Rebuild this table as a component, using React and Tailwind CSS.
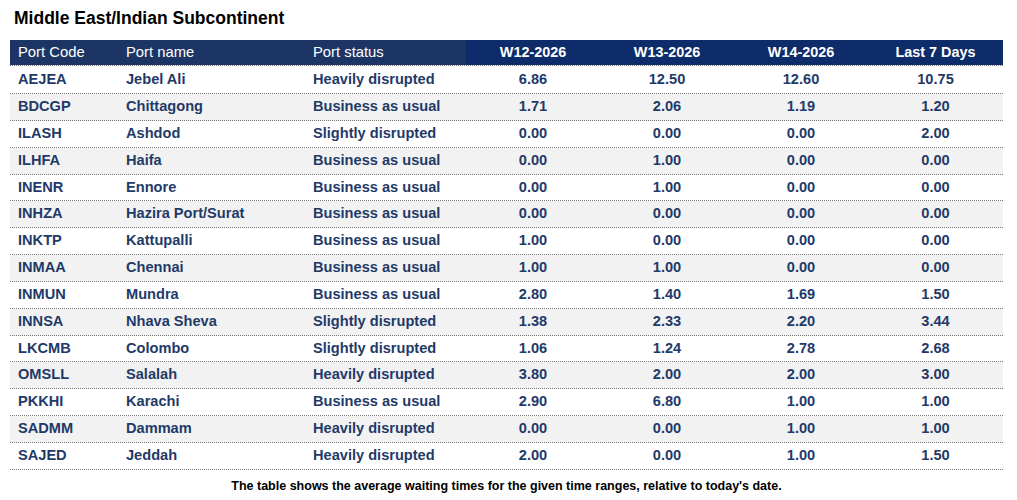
const rows = [
  ["AEJEA", "Jebel Ali", "Heavily disrupted", "6.86", "12.50", "12.60", "10.75"],
  ["BDCGP", "Chittagong", "Business as usual", "1.71", "2.06", "1.19", "1.20"],
  ["ILASH", "Ashdod", "Slightly disrupted", "0.00", "0.00", "0.00", "2.00"],
  ["ILHFA", "Haifa", "Business as usual", "0.00", "1.00", "0.00", "0.00"],
  ["INENR", "Ennore", "Business as usual", "0.00", "1.00", "0.00", "0.00"],
  ["INHZA", "Hazira Port/Surat", "Business as usual", "0.00", "0.00", "0.00", "0.00"],
  ["INKTP", "Kattupalli", "Business as usual", "1.00", "0.00", "0.00", "0.00"],
  ["INMAA", "Chennai", "Business as usual", "1.00", "1.00", "0.00", "0.00"],
  ["INMUN", "Mundra", "Business as usual", "2.80", "1.40", "1.69", "1.50"],
  ["INNSA", "Nhava Sheva", "Slightly disrupted", "1.38", "2.33", "2.20", "3.44"],
  ["LKCMB", "Colombo", "Slightly disrupted", "1.06", "1.24", "2.78", "2.68"],
  ["OMSLL", "Salalah", "Heavily disrupted", "3.80", "2.00", "2.00", "3.00"],
  ["PKKHI", "Karachi", "Business as usual", "2.90", "6.80", "1.00", "1.00"],
  ["SADMM", "Dammam", "Heavily disrupted", "0.00", "0.00", "1.00", "1.00"],
  ["SAJED", "Jeddah", "Heavily disrupted", "2.00", "0.00", "1.00", "1.50"],
];

const cols = "grid grid-cols-[108px_187px_161px_134px_134px_134px_135px]";

export default function App() {
  return (
    <div className="w-[1017px] h-[500px] bg-white font-['Liberation_Sans',Arial,sans-serif]">
      <div className="pl-[14px] pt-[8px] h-[40px] text-[17.5px] font-bold text-black leading-[21px]">
        Middle East/Indian Subcontinent
      </div>
      <div className="ml-[10px] w-[993px]">
        <div className={`${cols} h-[26px] items-center text-white text-[14.8px] border-b border-dotted border-[#7a7a7a]`}>
          <div className="bg-[#1d3565] h-full flex items-center pl-[8px]">Port Code</div>
          <div className="bg-[#1d3565] h-full flex items-center pl-[8px]">Port name</div>
          <div className="bg-[#1d3565] h-full flex items-center pl-[8px]">Port status</div>
          <div className="bg-[#0f2c6a] h-full flex items-center justify-center font-bold text-[14.4px]">W12-2026</div>
          <div className="bg-[#0f2c6a] h-full flex items-center justify-center font-bold text-[14.4px]">W13-2026</div>
          <div className="bg-[#0f2c6a] h-full flex items-center justify-center font-bold text-[14.4px]">W14-2026</div>
          <div className="bg-[#0f2c6a] h-full flex items-center justify-center font-bold text-[14.4px]">Last 7 Days</div>
        </div>
        {rows.map((r, i) => (
          <div
            key={r[0]}
            className={`${cols} ${i === 0 ? "h-[28px]" : "h-[26.85px]"} items-center text-[14.6px] font-bold text-[#1f3a68] border-b border-dotted border-[#7a7a7a] ${i % 2 === 1 ? "bg-[#f2f2f2]" : "bg-white"}`}
          >
            <div className="pl-[8px]">{r[0]}</div>
            <div className="pl-[8px]">{r[1]}</div>
            <div className="pl-[8px]">{r[2]}</div>
            <div className="text-center">{r[3]}</div>
            <div className="text-center">{r[4]}</div>
            <div className="text-center">{r[5]}</div>
            <div className="text-center">{r[6]}</div>
          </div>
        ))}
        <div className="text-center text-[12.5px] font-bold text-black pt-[7px]">
          The table shows the average waiting times for the given time ranges, relative to today's date.
        </div>
      </div>
    </div>
  );
}
